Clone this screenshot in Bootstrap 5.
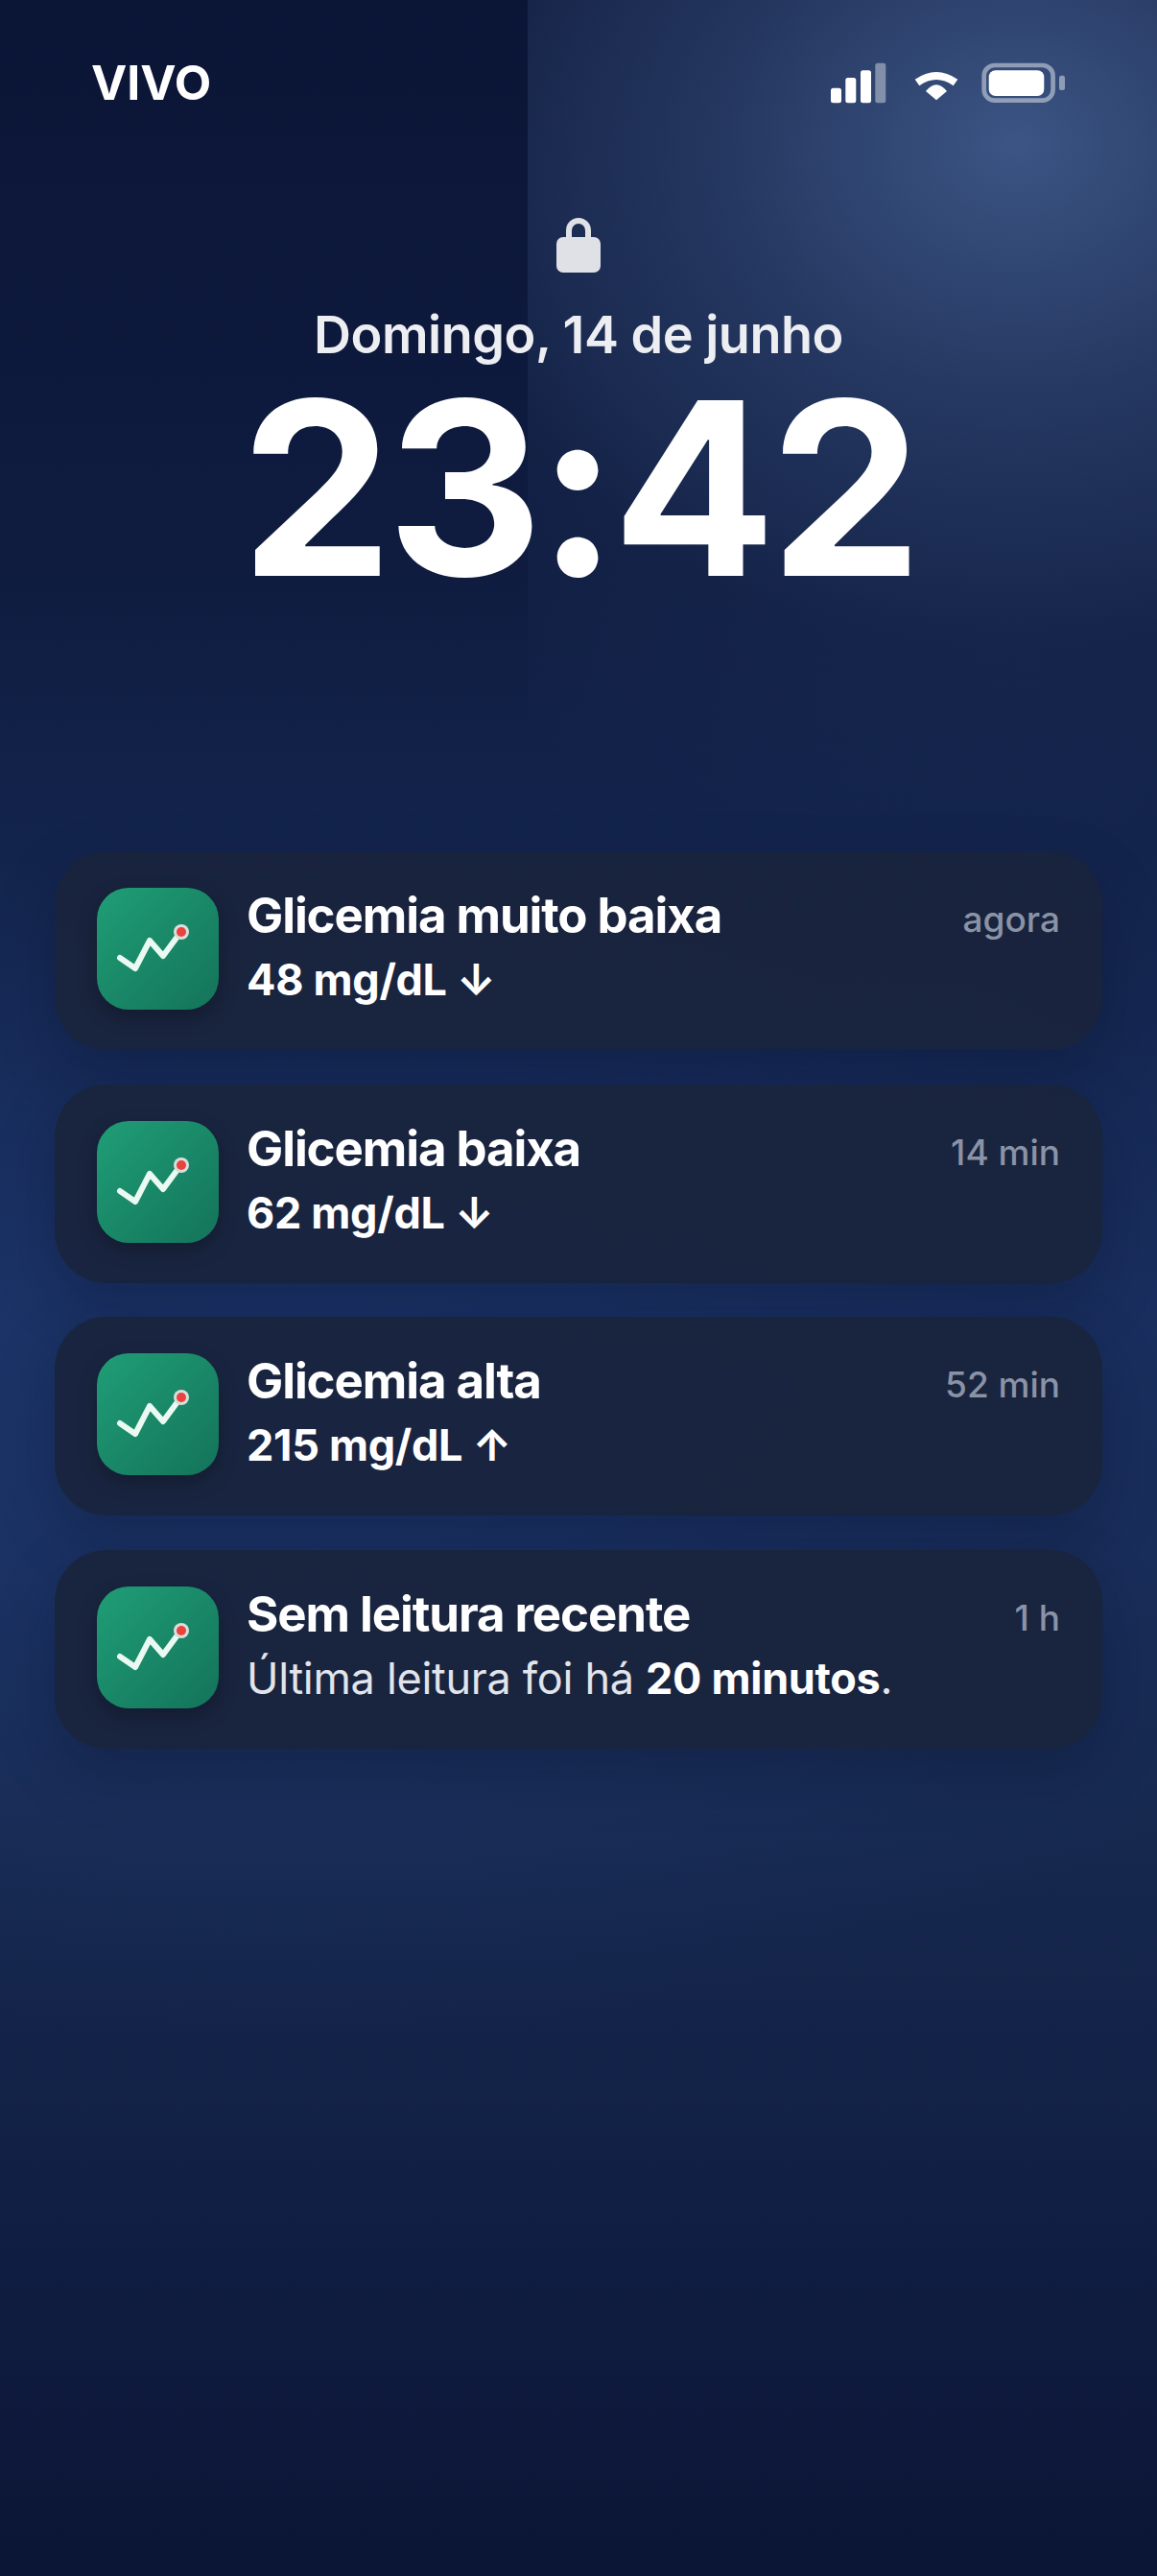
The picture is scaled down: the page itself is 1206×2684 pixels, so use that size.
<!doctype html>
<html lang="pt-BR">
<head>
<meta charset="utf-8">
<title>Tela de bloqueio</title>
<link href="https://cdn.jsdelivr.net/npm/bootstrap@5.3.0/dist/css/bootstrap.min.css" rel="stylesheet">
<style>
html,body{margin:0;height:100%}
body{width:1206px;height:2684px;overflow:hidden;font-family:"Inter","Liberation Sans",sans-serif;color:#fff;
background:
 radial-gradient(ellipse 900px 750px at 510px 150px,rgba(62,88,136,.95),rgba(62,88,136,.5) 34%,rgba(62,88,136,.27) 57%,rgba(62,88,136,.1) 70%,rgba(62,88,136,0) 100%) 550px 0/656px 950px no-repeat,
 radial-gradient(ellipse 1200px 620px at 300px 1500px,rgba(30,58,115,.7),rgba(30,58,115,0) 100%),
 linear-gradient(180deg,#0b1536 0%,#0f1c40 22%,#13244c 33%,#182c5a 50%,#17294f 70%,#101d42 88%,#0b1535 100%);}
.lockscreen{height:2684px}
.statusrow{height:174px;padding:65px 96px 0 95px}
.carrier{font-size:50px;font-weight:700;line-height:46px;margin-top:-2px}
.lockglyph{margin-top:53px;height:57px}
.datetext{font-size:54px;font-weight:600;letter-spacing:-.5px;line-height:62px;margin-top:34px;color:#eceef2}
.clocktext{font-size:252px;font-weight:700;line-height:1;letter-spacing:-6px;margin-top:3px}
.stack{margin:0 57px;padding-top:252px;gap:35.500px}
.notice{height:207px;border-radius:54px;background:rgba(25,35,60,.9);padding:38px 44px;gap:29px;box-shadow:0 24px 60px rgba(8,14,38,.28)}
.appicon{width:127px;height:127px;flex:none;border-radius:33px;background:linear-gradient(135deg,#1f9e76,#14735a);box-shadow:0 8px 20px rgba(0,0,0,.25)}
.titleline{font-size:51px;font-weight:700;letter-spacing:-1.100px;line-height:58px;margin-top:0}
.whenline{font-size:37px;font-weight:500;color:#8a93a6;line-height:44px;margin-top:11px}
.bodyline{font-size:45px;font-weight:700;letter-spacing:-.3px;line-height:52px;margin-top:12px}
.bodylight{font-weight:400;color:#e1e4ea}
.bodylight b{font-weight:700;color:#fff}
</style>
</head>
<body>
<main class="lockscreen d-flex flex-column">
  <div class="statusrow d-flex justify-content-between align-items-start">
    <div class="carrier">VIVO</div>
    <svg width="244" height="43" viewBox="0 0 244 43">
      <rect x="0" y="26.700" width="11" height="15.600" rx="2.500" fill="#fff"/>
      <rect x="15.300" y="16" width="11" height="26.300" rx="2.500" fill="#fff"/>
      <rect x="31" y="8.300" width="11" height="34" rx="2.500" fill="#fff"/>
      <rect x="46.300" y="0.700" width="11" height="41.600" rx="2.500" fill="#fff" fill-opacity=".4"/>
      <path d="M90 21Q110 7 130 21" fill="none" stroke="#fff" stroke-width="8"/>
      <path d="M99 30Q110 16.400 121 30L110 39.300Z" fill="#fff"/>
      <rect x="159.700" y="3" width="71.900" height="36.600" rx="11" fill="none" stroke="#fff" stroke-opacity=".45" stroke-width="4.700"/>
      <rect x="164.700" y="8.300" width="57.600" height="26.700" rx="7" fill="#fff"/>
      <rect x="238" y="13.700" width="6" height="15.400" rx="2.500" fill="#fff" fill-opacity=".45"/>
    </svg>
  </div>
  <div class="d-flex flex-column align-items-center">
    <svg class="lockglyph" width="46" height="57" viewBox="0 0 46 57">
      <path d="M13 25V13a10 10 0 0 1 20 0v12" fill="none" stroke="#dfe1e7" stroke-width="6"/>
      <rect x="0" y="20" width="46" height="37" rx="7" fill="#dfe1e7"/>
    </svg>
    <div class="datetext">Domingo, 14 de junho</div>
    <div class="clocktext">23:42</div>
  </div>
  <section class="stack d-flex flex-column">
    <article class="notice d-flex">
      <svg class="appicon" viewBox="0 0 127 127"><path d="M24 73L40 84L55 55L69 71L86 48" fill="none" stroke="#eafaf3" stroke-width="6" stroke-linecap="round" stroke-linejoin="round"/><circle cx="88" cy="46" r="8" fill="#d9dedc"/><circle cx="88" cy="46" r="5" fill="#e8433f"/></svg>
      <div class="flex-grow-1"><div class="titleline">Glicemia muito baixa</div><div class="bodyline">48 mg/dL ↓</div></div>
      <div class="whenline">agora</div>
    </article>
    <article class="notice d-flex">
      <svg class="appicon" viewBox="0 0 127 127"><path d="M24 73L40 84L55 55L69 71L86 48" fill="none" stroke="#eafaf3" stroke-width="6" stroke-linecap="round" stroke-linejoin="round"/><circle cx="88" cy="46" r="8" fill="#d9dedc"/><circle cx="88" cy="46" r="5" fill="#e8433f"/></svg>
      <div class="flex-grow-1"><div class="titleline">Glicemia baixa</div><div class="bodyline">62 mg/dL ↓</div></div>
      <div class="whenline">14 min</div>
    </article>
    <article class="notice d-flex">
      <svg class="appicon" viewBox="0 0 127 127"><path d="M24 73L40 84L55 55L69 71L86 48" fill="none" stroke="#eafaf3" stroke-width="6" stroke-linecap="round" stroke-linejoin="round"/><circle cx="88" cy="46" r="8" fill="#d9dedc"/><circle cx="88" cy="46" r="5" fill="#e8433f"/></svg>
      <div class="flex-grow-1"><div class="titleline">Glicemia alta</div><div class="bodyline">215 mg/dL ↑</div></div>
      <div class="whenline">52 min</div>
    </article>
    <article class="notice d-flex">
      <svg class="appicon" viewBox="0 0 127 127"><path d="M24 73L40 84L55 55L69 71L86 48" fill="none" stroke="#eafaf3" stroke-width="6" stroke-linecap="round" stroke-linejoin="round"/><circle cx="88" cy="46" r="8" fill="#d9dedc"/><circle cx="88" cy="46" r="5" fill="#e8433f"/></svg>
      <div class="flex-grow-1"><div class="titleline">Sem leitura recente</div><div class="bodyline bodylight">Última leitura foi há <b>20 minutos</b>.</div></div>
      <div class="whenline">1 h</div>
    </article>
  </section>
</main>
<script src="https://cdn.jsdelivr.net/npm/bootstrap@5.3.0/dist/js/bootstrap.bundle.min.js"></script>
</body>
</html>
